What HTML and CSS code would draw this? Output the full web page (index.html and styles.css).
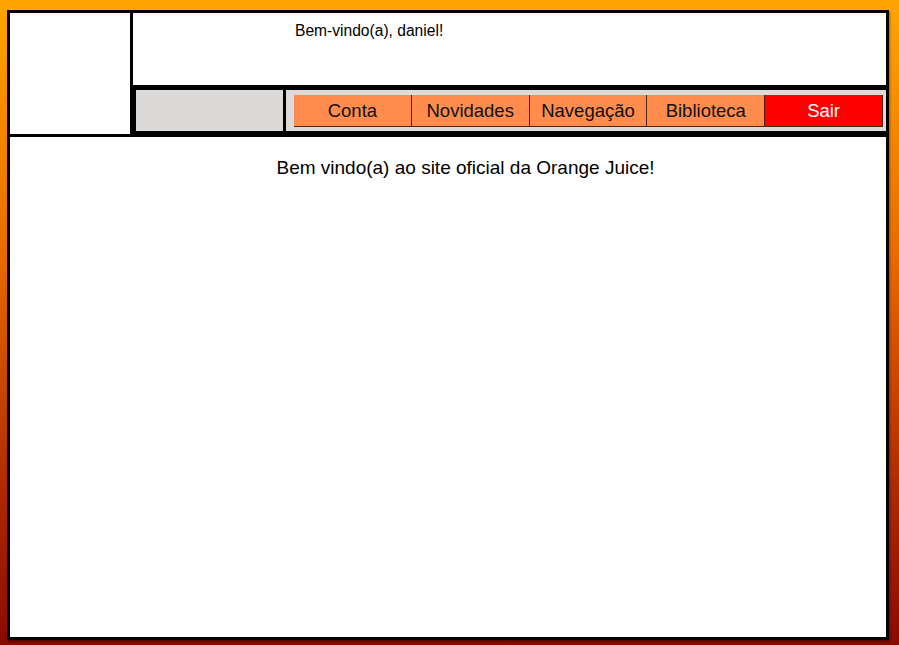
FILE: index.html
```html
<!DOCTYPE html>
<html lang="pt">
<head>
<meta charset="utf-8">
<title>Orange Juice</title>
<link rel="stylesheet" href="styles.css">
</head>
<body>
<div class="page">
  <div class="top">
    <div class="logo"></div>
    <div class="head">
      <div class="greet">Bem-vindo(a), daniel!</div>
      <div class="nav">
        <div class="side"></div>
        <div class="menu">
          <a class="btn">Conta</a>
          <a class="btn">Novidades</a>
          <a class="btn">Navegação</a>
          <a class="btn">Biblioteca</a>
          <a class="btn btn-exit">Sair</a>
        </div>
      </div>
    </div>
  </div>
  <div class="main">
    <p class="welcome">Bem vindo(a) ao site oficial da Orange Juice!</p>
  </div>
</div>
</body>
</html>
```

FILE: styles.css
```css
html, body {
  margin: 0;
  padding: 0;
}
body {
  width: 899px;
  height: 645px;
  overflow: hidden;
  background: linear-gradient(to bottom, #ffa500 0%, #e86a00 40%, #b02a00 75%, #8a0a00 100%);
  font-family: "Liberation Sans", Arial, sans-serif;
  color: #000;
}
.page {
  width: 876px;
  height: 624px;
  margin: 10px 0 0 7px;
  border: 3px solid #000;
  background: #fff;
  display: flex;
  flex-direction: column;
  box-shadow: 1px 2px 2px rgba(0, 0, 0, 0.35);
}
.top {
  display: flex;
  height: 124px;
}
.logo {
  width: 120px;
  background: #fff;
  border-right: 3px solid #000;
  border-bottom: 3px solid #000;
}
.head {
  flex: 1;
  display: flex;
  flex-direction: column;
}
.greet {
  height: 72px;
  box-sizing: border-box;
  padding: 9px 0 0 162px;
  font-size: 15.6px;
}
.nav {
  flex: 1;
  display: flex;
  gap: 3px;
  background: #000;
  padding: 5px 0 6px 3px;
}
.side {
  width: 147px;
  background: #dcd9d9;
}
.menu {
  flex: 1;
  display: flex;
  background: #dedada;
  padding: 5px 3px 4px 8px;
}
.btn {
  flex: 1;
  display: flex;
  align-items: center;
  justify-content: center;
  background: #ff8c4c;
  border-right: 1px solid #4a2410;
  border-bottom: 1px solid #4a2410;
  font-size: 18.5px;
  color: #111;
}
.btn-exit {
  background: #ff0000;
  color: #fff;
}
.main {
  flex: 1;
  padding: 20px 0 0 35px;
}
.welcome {
  margin: 0;
  text-align: center;
  font-size: 19px;
}
```
